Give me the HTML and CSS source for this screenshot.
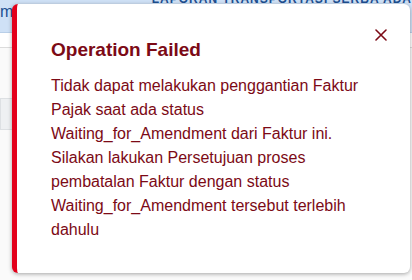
FILE: index.html
```html
<!DOCTYPE html>
<html lang="en">
<head>
    <meta charset="UTF-8">
    <meta name="viewport" content="width=device-width, initial-scale=1.0">
    <title>Operation Failed</title>
    <link rel="stylesheet" href="styles.css">
</head>
<body>
    <div class="page">
        <div class="topbar">
            <span class="topbar-left">m</span>
            <span class="topbar-title">LAPORAN TRANSPORTASI SERBA ADA</span>
        </div>
        <div class="row"></div>
        <div class="panel"></div>
    </div>

    <div class="toast" role="alert">
        <div class="toast-body">
            <h2 class="toast-title">Operation Failed</h2>
            <p class="toast-text">Tidak dapat melakukan penggantian Faktur Pajak saat ada status Waiting_for_Amendment dari Faktur ini. Silakan lakukan Persetujuan proses pembatalan Faktur dengan status Waiting_for_Amendment tersebut terlebih dahulu</p>
        </div>
        <button class="toast-close" aria-label="Close">
            <svg width="12" height="12" viewBox="0 0 12 12">
                <path d="M1 1L11 11M11 1L1 11" stroke="currentColor" stroke-width="1.6" stroke-linecap="round"/>
            </svg>
        </button>
    </div>
</body>
</html>
```

FILE: styles.css
```css
body {
    margin: 0;
    padding: 0;
    font-family: "Liberation Sans", Arial, sans-serif;
    background-color: #fafafa;
    width: 412px;
    height: 280px;
    overflow: hidden;
    position: relative;
}

.page {
    height: 100%;
}

.topbar {
    height: 32px;
    background: #cfe1f6;
    border-bottom: 1px solid #b9cfe8;
    color: #1d4f91;
    font-size: 16px;
    position: relative;
    overflow: hidden;
}

.topbar-left {
    position: absolute;
    left: 0;
    top: 3px;
}

.topbar-title {
    position: absolute;
    right: 0;
    top: -8px;
    font-size: 12px;
    font-weight: bold;
    letter-spacing: 1px;
}

.row {
    height: 14px;
    background: #fff;
    border-bottom: 1px solid #dcdcdc;
}

.panel {
    margin-top: 50px;
    width: 11px;
    height: 30px;
    background: #eef0f2;
    border: 1px solid #dde0e3;
}

.toast {
    position: absolute;
    left: 12px;
    top: 4px;
    width: 398px;
    height: 269px;
    box-sizing: border-box;
    background: #fff;
    border-left: 5px solid #e3001b;
    border-radius: 6px;
    box-shadow: 0 1px 4px rgba(0, 0, 0, 0.35);
    display: flex;
    align-items: flex-start;
    color: #7c0a16;
}

.toast-body {
    padding: 34px 0 0 34px;
    width: 318px;
    flex-shrink: 0;
}

.toast-title {
    margin: 0 0 12px;
    font-size: 19px;
    font-weight: bold;
    line-height: 24px;
}

.toast-text {
    margin: 0;
    font-size: 16px;
    line-height: 24px;
}

.toast-close {
    margin: 21px 0 0 2px;
    width: 20px;
    height: 20px;
    padding: 4px;
    box-sizing: border-box;
    border: none;
    background: none;
    color: #7c0a16;
    cursor: pointer;
    display: flex;
}
```
